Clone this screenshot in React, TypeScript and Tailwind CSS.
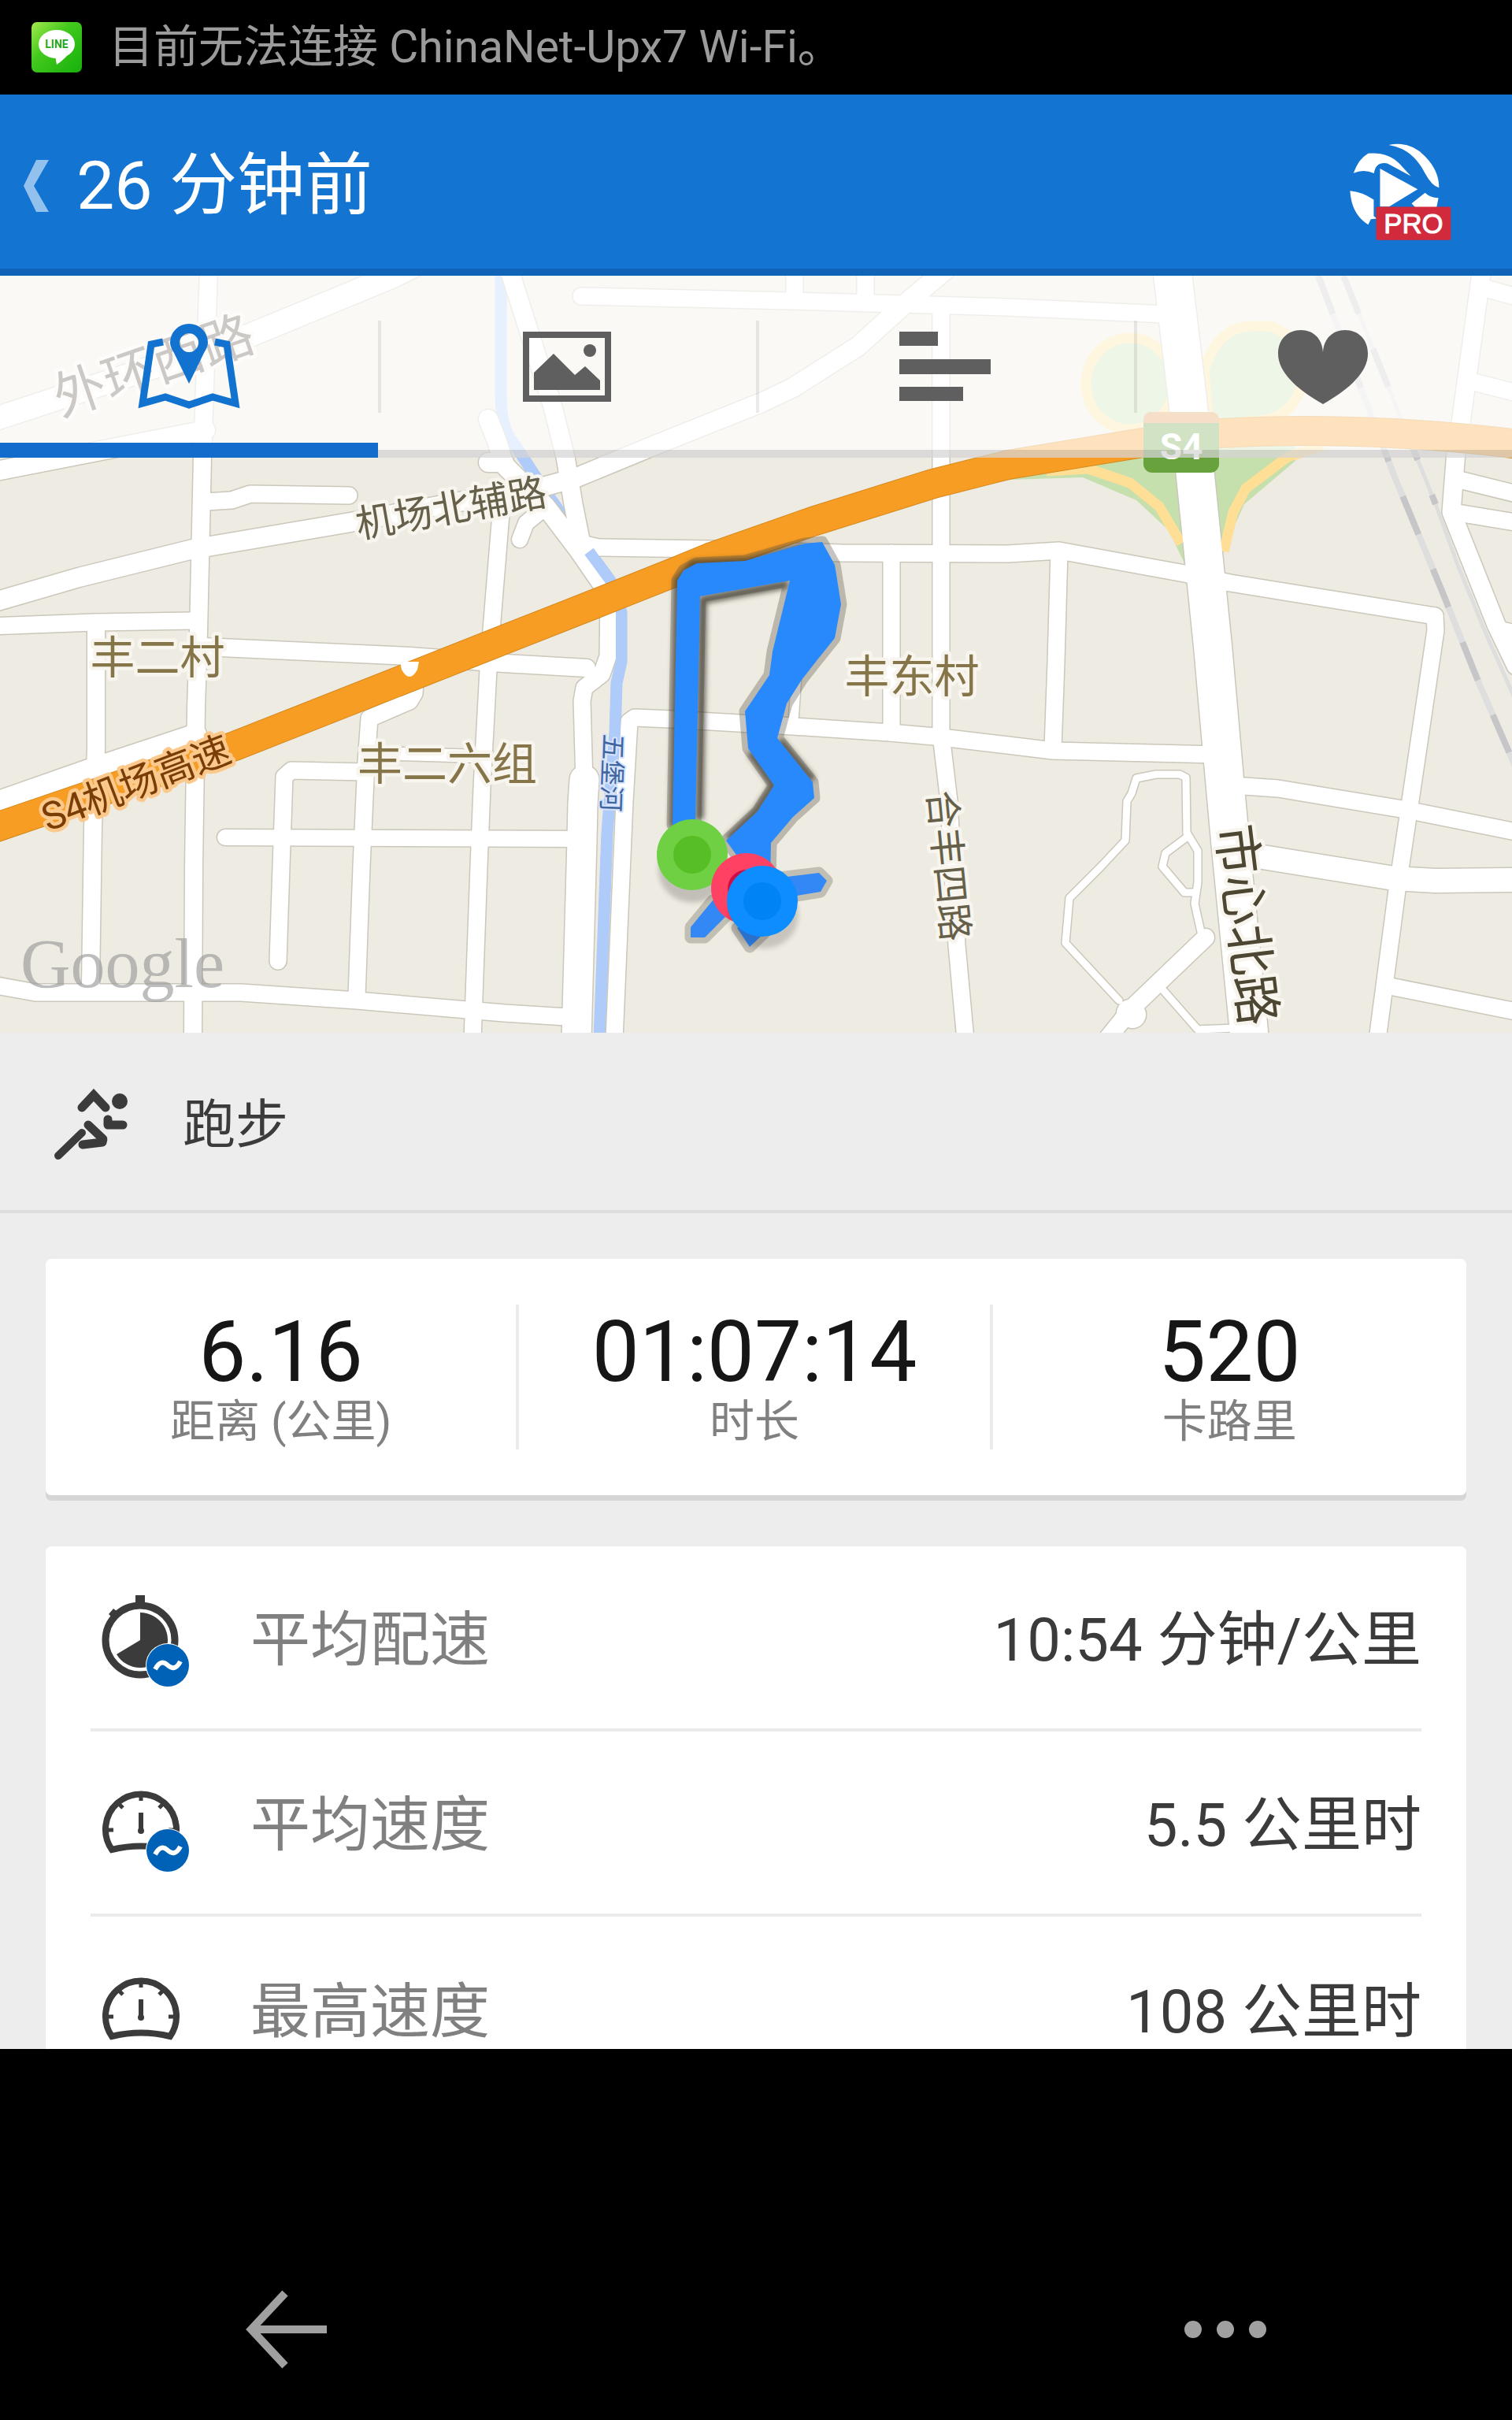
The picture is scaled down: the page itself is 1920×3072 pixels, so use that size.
import React from "react";

type Road = { d: string; w: number };

const ROADS: Road[] = [
  { d: "M-10 533 L314 427 L500 350 L530 335", w: 29 },
  { d: "M-10 599 L261 546", w: 24 },
  { d: "M265 340 L257 581 L252 803 L249 900 L246 1100 L245 1320", w: 22 },
  { d: "M261 637 L294 635 L318 627 L443 629", w: 21 },
  { d: "M-10 765 L100 733 L245 697 L445 663 L610 632 L693 617 L730 607 L832 565 L967 511 L1007 492 L1089 440 L1150 385 L1210 335", w: 24 },
  { d: "M-10 795 L120 790 L245 788", w: 21 },
  { d: "M122 795 L122 950 L118 1050 L115 1250", w: 22 },
  { d: "M258 821 L520 833 L640 842 L745 848", w: 22 },
  { d: "M-10 1020 L110 978 L249 932", w: 26 },
  { d: "M620 532 L631 560 L640 590 L693 643 L734 697 L772 752", w: 24 },
  { d: "M620 587 L640 587", w: 24 },
  { d: "M685 650 L668 664 L660 685", w: 20 },
  { d: "M646 340 L701 513 L718 580 L728 640 L738 690", w: 23 },
  { d: "M637 640 L624 800 L620 850 L612 1000 L608 1100 L600 1320", w: 21 },
  { d: "M773 760 L772 833 L764 856 L742 873 L739 890 L742 993", w: 21 },
  { d: "M742 990 L740 1020 L739 1066 L732 1320", w: 37 },
  { d: "M738 690 L760 695 L901 697 L1069 702 L1280 703 L1345 699 L1504 728 L1562 740 L1822 782", w: 21 },
  { d: "M1822 782 L1823 800 L1790 1023 L1774 1130 L1749 1320", w: 21 },
  { d: "M738 376 L1007 382 L1280 390 L1480 399", w: 21 },
  { d: "M1009 340 L1009 382", w: 21 },
  { d: "M1099 340 L1099 385", w: 21 },
  { d: "M1195 390 L1195 933 L1205 1017 L1215 1200 L1226 1320", w: 21 },
  { d: "M1132 702 L1132 930", w: 21 },
  { d: "M1012 850 L1007 923", w: 12 },
  { d: "M1345 700 L1341 840 L1337 950", w: 21 },
  { d: "M780 1320 L793 1017 L799 916 L806 911 L852 913 L1007 922 L1130 930 L1187 935 L1280 946 L1337 953 L1545 958", w: 21 },
  { d: "M1580 998 L1623 1001 L1786 1028 L1930 1057", w: 21 },
  { d: "M1585 1085 L1770 1115 L1823 1118 L1930 1117", w: 30 },
  { d: "M1765 1252 L1930 1285", w: 21 },
  { d: "M1882 340 L1855 537 L1849 573 L1843 650 L1900 793 L1925 845", w: 23 },
  { d: "M1882 365 L1930 378", w: 21 },
  { d: "M1868 484 L1930 500", w: 21 },
  { d: "M1849 608 L1930 628", w: 21 },
  { d: "M1845 650 L1930 664", w: 21 },
  { d: "M1905 797 L1930 803", w: 16 },
  { d: "M527 865 L526 880 L520 890 L469 912 L465 967 L459 1100 L453 1265", w: 21 },
  { d: "M465 980 L370 978 L361 986 L357 1100 L353 1220", w: 21 },
  { d: "M286 1063 L735 1065", w: 20 },
  { d: "M469 956 L612 960", w: 16 },
  { d: "M-10 1250 L45 1260 L306 1260 L453 1270 L640 1286 L735 1292", w: 21 },
  { d: "M1507 1057 L1506 987 L1498 983 L1468 983 L1443 988 L1437 1007 L1431 1017 L1429 1067 L1398 1100 L1358 1140 L1353 1197 L1421 1270", w: 9 },
  { d: "M1507 1057 L1521 1080 L1521 1120 L1517 1147 L1525 1183", w: 9 },
  { d: "M1508 1062 L1480 1083 L1476 1100 L1504 1133 L1517 1133", w: 9 },
  { d: "M1478 1258 L1521 1307 L1570 1305", w: 9 },
  { d: "M1531 1190 L1437 1280 L1405 1320", w: 22 },
  { d: "M1435 1286 L1438 1288", w: 34 },
  { d: "M1488 340 L1508 507 L1525 673 L1540 820 L1553 967 L1562 1067 L1587 1320", w: 48 },
];

const RIVER =
  "M636 340 V500 Q636 545 652 562 L677 600 L697 630 L718 660 L748 700 L775 737 L789 777 L789 840 L783 867 L781 930 L771 1057 L761 1320";
const HIGHWAY =
  "M-10 1052 L298 947 L506 865 L640 812 L762 764 L860 725 L901 708 L1032 662 L1185 614 L1280 590 L1451 562 L1549 550 Q1729 540 1930 564";
const ROUTE =
  "M854 1047 L860 737 L868 724 L885 715 L946 712 L1022 690 L1044 688 L1060 717 L1068 767 L1060 810 L1036 840 L1018 863 L999 893 L987 937 L1032 993 L1034 1013 L1007 1037 L979 1070 L978 1115 L960 1120 L922 1067 L962 1030 L983 997 L950 950 L946 903 L977 857 L981 827 L1003 737 L889 757 L883 1047 Z";
const ROUTE_ENDS =
  "M905 1143 L877 1177 L877 1190 L895 1190 L925 1160 L950 1150 Z M990 1114 L1040 1108 L1050 1118 L1042 1132 L1000 1139 Z M936 1178 L952 1202 L970 1185 L960 1160 Z";

function MapView() {
  return (
    <svg
      className="block h-[961px] w-full"
      viewBox="0 350 1920 961"
      preserveAspectRatio="xMidYMid slice"
      role="img"
      aria-label="路线地图"
    >
      <defs>
        <filter id="soft" x="-20%" y="-20%" width="140%" height="140%">
          <feGaussianBlur stdDeviation="3" />
        </filter>
      </defs>
      <rect x="-400" y="350" width="2720" height="961" fill="#eeebe2" />
      <path d="M1280 609 L1375 606 L1443 635 L1484 673 L1505 717 L1553 700 L1580 640 L1645 585 L1645 555 L1280 580 Z" fill="#c5dfad" />
      <ellipse cx="1435" cy="487" rx="56" ry="58" fill="#c5dfad" stroke="#ffdf96" strokeWidth="13" />
      <path d="M1529 470 Q1545 418 1585 414 L1615 414 Q1655 432 1657 470 Q1650 530 1598 534 L1535 540 Z" fill="#c5dfad" stroke="#ffdf96" strokeWidth="13" />
      <g fill="none" strokeLinejoin="round">
        <path d={RIVER} stroke="#aecbfa" strokeWidth="15" />
        <g strokeLinecap="round">
          {ROADS.map((r) => (
            <path key={r.d} d={r.d} stroke="#cbc7ba" strokeWidth={r.w + 3} />
          ))}
        </g>
        <path d="M1329 598 L1382 595 L1435 613 L1472 643 L1500 690" stroke="#ffdf96" strokeWidth="13" />
        <path d="M1554 700 L1566 650 L1582 620 L1635 580 L1680 566" stroke="#ffdf96" strokeWidth="13" />
        <g strokeLinecap="round" stroke="#ffffff">
          {ROADS.map((r) => (
            <path key={r.d} d={r.d} strokeWidth={r.w} />
          ))}
        </g>
        <path d="M748 700 L775 737 L789 777 L789 840 L783 867 L781 930 L771 1057 L761 1320" stroke="#aecbfa" strokeWidth="14" />
        <g strokeWidth="8">
          <path d="M1674 350 L1770 603 L1831 750 L1851 800 L1878 867 L1925 975" stroke="#dedede" />
          <path d="M1674 350 L1770 603 L1831 750 L1851 800 L1878 867 L1925 975" stroke="#c6c6c8" strokeDasharray="52 48" />
          <path d="M1706 350 L1800 583 L1823 640 L1851 717 L1885 800 L1925 890" stroke="#dedede" strokeWidth="5" />
          <path d="M1706 350 L1800 583 L1823 640" stroke="#c6c6c8" strokeDasharray="52 48" />
        </g>
        <path d={HIGHWAY} stroke="#d58a1e" strokeWidth="38" />
        <path d={HIGHWAY} stroke="#f89d23" strokeWidth="36" />
      </g>
      <path d="M508 840 H532 L530 850 Q520 868 510 850 Z" fill="#ffffff" />

      <g fill="none" strokeLinejoin="round">
        <path d={ROUTE} stroke="#5b564a" strokeOpacity="0.35" strokeWidth="15" />
        <path d={ROUTE_ENDS} stroke="#5b564a" strokeOpacity="0.3" strokeWidth="15" />
        <path d="M855 1050 L861 737 L880 716 L950 713 L1020 694 M889 1040 L893 762 L1000 742 M990 940 L1032 990 M953 955 L982 997 L960 1030 L925 1065" stroke="#3b382f" strokeOpacity="0.7" strokeWidth="10" filter="url(#soft)" />
      </g>
      <path d={ROUTE_ENDS} fill="#3388f5" />
      <path d={ROUTE} fill="#2889fc" />

      <ellipse cx="880" cy="1104" rx="44" ry="42" fill="#000000" opacity="0.18" filter="url(#soft)" />
      <circle cx="879" cy="1085" r="45" fill="#6fd044" />
      <circle cx="879" cy="1085" r="24" fill="#57be25" />
      <circle cx="948" cy="1128" r="45" fill="#ff4163" />
      <circle cx="948" cy="1128" r="24" fill="#cf0f43" />
      <ellipse cx="970" cy="1162" rx="44" ry="42" fill="#000000" opacity="0.16" filter="url(#soft)" />
      <circle cx="968" cy="1144" r="45" fill="#0d8dff" />
      <circle cx="968" cy="1144" r="24" fill="#0083f4" />

      <g
        textAnchor="middle"
        dominantBaseline="central"
        strokeWidth="9"
        strokeLinejoin="round"
        stroke="#f7f5ee"
        className="font-['Roboto','Noto_Sans_CJK_SC',sans-serif] [paint-order:stroke]"
      >
        <text transform="translate(195 465) rotate(-19)" fontSize="66" fill="#50483c">外环西路</text>
        <text transform="translate(573 646) rotate(-10)" fontSize="49" fill="#66604a">机场北辅路</text>
        <g fontSize="57" fill="#857548">
          <text x="200" y="835">丰二村</text>
          <text x="568" y="970">丰二六组</text>
          <text x="1158" y="859">丰东村</text>
        </g>
        <text transform="translate(173 995) rotate(-21)" fontSize="49" fill="#7a3d05" stroke="#fcc98c">S4机场高速</text>
        <text transform="translate(777 981) rotate(92)" fontSize="33" fill="#41659f" stroke="#d5e4fc" strokeWidth="4">五堡河</text>
        <text transform="translate(1204 1099) rotate(84.5)" fontSize="48" fill="#66604a">合丰四路</text>
        <text transform="translate(1582 1174) rotate(83)" fontSize="64" fill="#4c4632">市心北路</text>
      </g>
      <g>
        <rect x="1452" y="523" width="96" height="77" rx="11" fill="#68a23d" />
        <path d="M1452 537 V534 Q1452 523 1463 523 H1537 Q1548 523 1548 534 V537 Z" fill="#dd944b" />
        <text x="1500" y="583" textAnchor="middle" fontSize="46" fontWeight="700" fill="#ffffff" className="font-['Roboto',sans-serif]">S4</text>
      </g>
      <text x="26" y="1253" fontSize="88" fill="#9a9a9a" fillOpacity="0.65" className="font-['Liberation_Serif',serif]">Google</text>
    </svg>
  );
}

function LineIcon() {
  return (
    <svg className="h-16 w-16 shrink-0" viewBox="0 0 64 64" aria-hidden="true">
      <defs>
        <linearGradient id="lineBg" x1="0" y1="0" x2="1" y2="1">
          <stop offset="0" stopColor="#a5ea4e" />
          <stop offset="0.4" stopColor="#43c91d" />
          <stop offset="1" stopColor="#16b00c" />
        </linearGradient>
      </defs>
      <rect width="64" height="64" rx="7" fill="url(#lineBg)" />
      <ellipse cx="32" cy="28" rx="23" ry="18" fill="#ffffff" />
      <path d="M30 43 L32 54 Q44 46 51 35 Z" fill="#ffffff" />
      <text x="32" y="33" textAnchor="middle" fontSize="14" fontWeight="700" fill="#27a61b" className="font-['Roboto',sans-serif]">LINE</text>
    </svg>
  );
}

function ProLogo() {
  return (
    <svg className="mt-4 h-[127px] w-[137px]" viewBox="930 180 410 380" aria-hidden="true">
      <g fill="#ffffff">
        <path d="M1090 192 Q1170 175 1228 235 Q1282 290 1281 354 Q1255 350 1228 300 Q1180 205 1090 192 Z" />
        <path d="M956 299 Q975 245 1012 224 Q1085 218 1130 262 L1174 310 L1085 262 Q1040 255 1034 300 Q995 282 956 299 Z" />
        <path d="M943 366 Q990 370 1033 400 V462 L1045 472 L1022 474 L1012 495 Q948 455 943 366 Z" />
        <path d="M1057 282 L1200 360 L1092 426 H1057 Z" />
        <path d="M1228 374 Q1250 394 1279 393 L1272 428 H1190 L1177 414 Z" />
      </g>
      <rect x="1042" y="427" width="284" height="126" rx="6" fill="#d02a3c" />
      <text x="1184" y="526" textAnchor="middle" fontSize="104" fill="#ffffff" stroke="#ffffff" strokeWidth="3" className="font-['Liberation_Sans',sans-serif]">PRO</text>
    </svg>
  );
}

const iconClass = "h-[120px] w-[140px]";

function MapTabIcon() {
  return (
    <svg className={iconClass} viewBox="170 406 140 120" aria-hidden="true">
      <path d="M207 434 L192 437 L181 512 L210 504 L240 514 L270 504 L299 512 L288 437 L273 434" fill="none" stroke="#1272d0" strokeWidth="9" />
      <path fillRule="evenodd" d="M240 487 L221 448 Q216 440 216 435 A24 24 0 0 1 264 435 Q264 440 259 448 Z M240 423 a12 12 0 1 0 0.1 0 Z" fill="#1272d0" />
    </svg>
  );
}

function PhotoTabIcon() {
  return (
    <svg className={iconClass} viewBox="650 406 140 120" aria-hidden="true" fill="#5f5f5f">
      <rect x="668" y="425" width="104" height="81" fill="none" stroke="#5f5f5f" strokeWidth="8" />
      <path d="M678 473 L703 449 L730 476 L743 465 L762 483 V495 H678 Z" />
      <circle cx="749" cy="445" r="8" />
    </svg>
  );
}

function ListTabIcon() {
  return (
    <svg className={iconClass} viewBox="1130 406 140 120" aria-hidden="true" fill="#5f5f5f">
      <rect x="1142" y="421" width="49" height="18" />
      <rect x="1142" y="456" width="116" height="19" />
      <rect x="1142" y="491" width="81" height="18" />
    </svg>
  );
}

function HeartTabIcon() {
  return (
    <svg className={iconClass} viewBox="1610 406 140 120" aria-hidden="true">
      <path
        d="M1680 513 C1650 496 1623 474 1623 449 C1623 431 1635 419 1652 419 C1668 419 1679 430 1680 447 C1681 430 1692 419 1708 419 C1725 419 1737 431 1737 449 C1737 474 1710 496 1680 513 Z"
        fill="#5f5f5f"
      />
    </svg>
  );
}

function RunnerIcon() {
  return (
    <svg className="h-[92px] w-[100px]" viewBox="66 1380 100 92" fill="none" stroke="#3b3b3b" strokeWidth="11" strokeLinecap="round" strokeLinejoin="round" aria-hidden="true">
      <circle cx="152" cy="1396" r="10" fill="#3b3b3b" stroke="none" />
      <path d="M104 1404 L119 1388 L134 1404" strokeLinejoin="miter" />
      <path d="M137 1419 V1426 H156" />
      <path d="M112 1426 L131 1444 L130 1448 L105 1451" />
      <path d="M104 1436 L74 1465" strokeWidth="10" />
    </svg>
  );
}

function AverageBadge() {
  return (
    <>
      <circle cx="89" cy="99" r="28" fill="#ffffff" />
      <circle cx="89" cy="99" r="27" fill="#0062b6" />
      <path d="M73 104 Q80 91 88 98 Q98 108 105 94" fill="none" stroke="#ffffff" strokeWidth="6" />
    </>
  );
}

function StopwatchIcon() {
  return (
    <svg className="h-32 w-[116px] shrink-0" viewBox="0 0 116 128" aria-hidden="true">
      <circle cx="54" cy="67" r="44" fill="none" stroke="#3b3b3b" strokeWidth="9" />
      <rect x="48" y="10" width="12" height="14" fill="#3b3b3b" />
      <path d="M14 34 L20 27 L28 33 L20 40 Z" fill="#3b3b3b" />
      <path d="M54 67 V32 A35 35 0 1 1 24 85 Z" fill="#3b3b3b" />
      <AverageBadge />
    </svg>
  );
}

function GaugeIcon({ average }: { average: boolean }) {
  return (
    <svg className="h-32 w-[116px] shrink-0" viewBox="0 0 116 128" aria-hidden="true">
      <path d="M18 98 A45 45 0 1 1 92 98 Q55 89 18 98 Z" fill="none" stroke="#3b3b3b" strokeWidth="8" />
      <path d="M55 26 V36 M26 39 L32 45 M84 39 L78 45 M12 73 H20 M98 73 H90" stroke="#3b3b3b" strokeWidth="5" />
      <path d="M55 51 V72" stroke="#3b3b3b" strokeWidth="6" />
      <circle cx="55" cy="74" r="4" fill="#3b3b3b" />
      {average && <AverageBadge />}
    </svg>
  );
}

const TABS = [
  { label: "地图", icon: <MapTabIcon />, active: true },
  { label: "照片", icon: <PhotoTabIcon />, active: false },
  { label: "分段", icon: <ListTabIcon />, active: false },
  { label: "心率", icon: <HeartTabIcon />, active: false },
];

const STATS = [
  { value: "6.16", label: "距离 (公里)" },
  { value: "01:07:14", label: "时长" },
  { value: "520", label: "卡路里" },
];

const DETAILS = [
  { icon: <StopwatchIcon />, label: "平均配速", value: "10:54 分钟/公里" },
  { icon: <GaugeIcon average />, label: "平均速度", value: "5.5 公里时" },
  { icon: <GaugeIcon average={false} />, label: "最高速度", value: "108 公里时" },
];

export default function App() {
  return (
    <div className="flex h-screen flex-col overflow-hidden bg-black font-['Roboto','Noto_Sans_CJK_SC',sans-serif]">
      <div className="flex h-[120px] shrink-0 items-center gap-[34px] pl-10 text-[57px] leading-[64px] text-[#9b9b9b]">
        <LineIcon />
        <span className="whitespace-nowrap">目前无法连接 ChinaNet-Upx7 Wi-Fi。</span>
      </div>

      <header className="flex h-[230px] shrink-0 items-center justify-between border-b-[9px] border-[#0f64b8] bg-[#1374d1] pt-[10px] pr-[73px] pl-[30px]">
        <button type="button" className="flex items-center gap-[35px] text-white">
          <svg className="h-[66px] w-8" viewBox="0 0 32 66" aria-hidden="true">
            <path d="M16 0 H32 L13 33 L32 66 H16 L0 33 Z" fill="#93c1ee" />
          </svg>
          <h1 className="text-[86px] leading-[100px] font-normal">26 分钟前</h1>
        </button>
        <ProLogo />
      </header>

      <main className="min-h-0 flex-1 overflow-hidden bg-[#ededed]">
        <section className="relative">
          <MapView />
          <nav className="absolute inset-x-0 top-0 grid h-[231px] grid-cols-4 bg-white/70">
            {TABS.map((tab, i) => (
              <button
                key={tab.label}
                type="button"
                aria-label={tab.label}
                className={
                  tab.active
                    ? "flex items-center border-b-[19px] border-[#116ccb] pt-[19px]"
                    : "flex items-center border-b-[10px] border-black/12 pt-[10px]"
                }
              >
                <span className="flex flex-1 justify-center">{tab.icon}</span>
                {i < TABS.length - 1 && <span className="-mr-1 h-[117px] w-1 bg-black/8" />}
              </button>
            ))}
          </nav>
        </section>

        <section className="flex h-[229px] items-center gap-[66px] border-b-4 border-[#dcdcdc] pt-2 pl-[66px]">
          <RunnerIcon />
          <h2 className="text-[67px] leading-[80px] font-normal text-[#3b3b3b]">跑步</h2>
        </section>

        <div className="flex flex-col gap-[65px] px-[58px] pt-[58px]">
          <dl className="grid grid-cols-3 divide-x-4 divide-[#ebebeb] rounded-[7px] bg-white py-[58px] shadow-[0_7px_0_#d6d6d6]">
            {STATS.map((s) => (
              <div key={s.label} className="flex h-[184px] flex-col-reverse items-center justify-center pt-[6px]">
                <dt className="text-[57px] leading-[68px] text-[#808080]">{s.label}</dt>
                <dd className="text-[107px] leading-[108px] text-[#161616]">{s.value}</dd>
              </div>
            ))}
          </dl>

          <dl className="divide-y-4 divide-[#ebebeb] rounded-[7px] bg-white px-[57px]">
            {DETAILS.map((row) => (
              <div key={row.label} className="flex h-[235px] items-center pl-[9px]">
                {row.icon}
                <dt className="flex-1 pt-[6px] pl-[78px] text-[76px] leading-[92px] text-[#808080]">{row.label}</dt>
                <dd className="pt-[6px] text-[76px] leading-[92px] text-[#3b3b3b]">{row.value}</dd>
              </div>
            ))}
          </dl>
        </div>
      </main>

      <footer className="flex h-[471px] shrink-0 items-end justify-between px-[308px] pb-[59px]">
        <button type="button" aria-label="返回" className="flex h-28 w-28 items-center justify-center">
          <svg className="h-[100px] w-[104px]" viewBox="0 0 104 100" fill="none" stroke="#a0a0a0" strokeWidth="10" aria-hidden="true">
            <path d="M50 4 L7 50 L50 96 M7 50 H103" />
          </svg>
        </button>
        <button type="button" aria-label="更多" className="flex h-28 w-28 items-center justify-center gap-[19px]">
          <span className="h-[22px] w-[22px] shrink-0 rounded-full bg-[#a0a0a0]" />
          <span className="h-[22px] w-[22px] shrink-0 rounded-full bg-[#a0a0a0]" />
          <span className="h-[22px] w-[22px] shrink-0 rounded-full bg-[#a0a0a0]" />
        </button>
      </footer>
    </div>
  );
}
